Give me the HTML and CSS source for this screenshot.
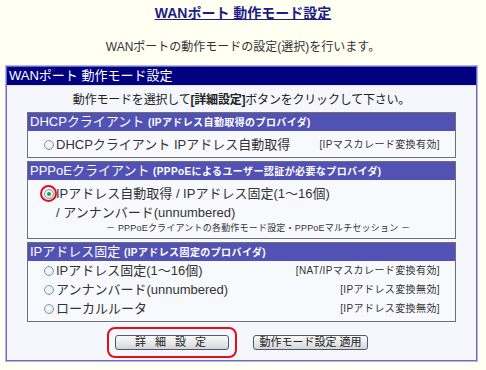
FILE: index.html
```html
<!DOCTYPE html>
<html lang="ja">
<head>
    <meta charset="UTF-8">
    <title>WANポート 動作モード設定</title>
    <link rel="stylesheet" href="styles.css">
</head>
<body>
    <h1 class="title"><a href="#">WANポート 動作モード設定</a></h1>
    <p class="lead">WANポートの動作モードの設定(選択)を行います。</p>

    <div class="panel">
        <div class="panel-frame">
            <div class="panel-head">WANポート 動作モード設定</div>
            <div class="panel-body">
                <p class="guide">動作モードを選択して<b>[詳細設定]</b>ボタンをクリックして下さい。</p>

                <div class="group">
                    <div class="group-head">DHCPクライアント <small>(IPアドレス自動取得のプロバイダ)</small></div>
                    <div class="group-body first">
                        <div class="opt">
                            <span class="radio"></span>
                            <span class="opt-text">DHCPクライアント IPアドレス自動取得</span>
                            <span class="note">[IPマスカレード変換有効]</span>
                        </div>
                    </div>
                </div>

                <div class="group">
                    <div class="group-head">PPPoEクライアント <small>(PPPoEによるユーザー認証が必要なプロバイダ)</small></div>
                    <div class="group-body first">
                        <div class="opt">
                            <span class="radio checked"><span class="ring"></span></span>
                            <span class="opt-text">IPアドレス自動取得 / IPアドレス固定(1～16個)<br>/ アンナンバード(unnumbered)</span>
                        </div>
                        <div class="sub-note">－ PPPoEクライアントの各動作モード設定・PPPoEマルチセッション －</div>
                    </div>
                </div>

                <div class="group">
                    <div class="group-head">IPアドレス固定 <small>(IPアドレス固定のプロバイダ)</small></div>
                    <div class="group-body">
                        <div class="opt">
                            <span class="radio"></span>
                            <span class="opt-text">IPアドレス固定(1～16個)</span>
                            <span class="note">[NAT/IPマスカレード変換有効]</span>
                        </div>
                        <div class="opt">
                            <span class="radio"></span>
                            <span class="opt-text">アンナンバード(unnumbered)</span>
                            <span class="note">[IPアドレス変換無効]</span>
                        </div>
                        <div class="opt">
                            <span class="radio"></span>
                            <span class="opt-text">ローカルルータ</span>
                            <span class="note">[IPアドレス変換無効]</span>
                        </div>
                    </div>
                </div>

                <div class="actions">
                    <span class="mark-wrap">
                        <button class="btn btn-detail">詳 細 設 定</button>
                        <span class="mark-box"></span>
                    </span>
                    <button class="btn btn-apply">動作モード設定 適用</button>
                </div>
            </div>
        </div>
    </div>
</body>
</html>
```

FILE: styles.css
```css
body {
    margin: 0;
    background-color: #fffff2;
    color: #222;
    font-family: "Liberation Sans", "Noto Sans CJK JP", sans-serif;
    font-size: 12px;
}
.title {
    margin: 0;
    padding-top: 4px;
    line-height: 18px;
    font-size: 14px;
    font-weight: bold;
    text-align: center;
}
.title a {
    color: #1c1c86;
}
.lead {
    margin: 17px 0 0;
    line-height: 16px;
    text-align: center;
    color: #333;
}
.panel {
    margin: 10px 8px 0 5px;
    border: 1px solid #b4b4ea;
}
.panel-frame {
    border: 1px solid #6a6ac6;
    background-color: #f5f7fc;
}
.panel-head {
    height: 18px;
    line-height: 18px;
    padding-left: 2px;
    background-color: #000080;
    color: #fff;
    font-size: 13px;
    border-bottom: 1px solid #e4e4f4;
}
.panel-body {
    padding: 6px 20px 10px;
}
.guide {
    margin: 0 0 4px;
    line-height: 16px;
    text-align: center;
    letter-spacing: -0.2px;
    color: #222;
}
.group {
    border: 1px solid #707070;
    background-color: #f8f9fd;
    margin-bottom: 3px;
}
.group-head {
    height: 18px;
    line-height: 18px;
    padding-left: 2px;
    background-color: #5252b4;
    color: #fff;
    font-size: 13px;
    white-space: nowrap;
}
.group-head small {
    font-size: 10px;
    font-weight: bold;
    letter-spacing: 0.4px;
}
.group-body {
    padding: 0 15px 3px 16px;
}
.group-body.first {
    padding-top: 4px;
    padding-bottom: 3px;
}
.opt {
    display: flex;
    align-items: flex-start;
    line-height: 19px;
    font-size: 13px;
    color: #333;
}
.opt-text {
    flex: 1;
}
.radio {
    position: relative;
    flex: none;
    width: 8px;
    height: 8px;
    margin: 5px 2px 0 0;
    border: 1px solid #7c98b8;
    border-radius: 50%;
    background: radial-gradient(circle at 40% 40%, #ffffff, #d4deea);
}
.radio.checked::after {
    content: "";
    position: absolute;
    left: 2px;
    top: 2px;
    width: 4px;
    height: 4px;
    border-radius: 50%;
    background-color: #2ca02c;
}
.ring {
    position: absolute;
    left: -5px;
    top: -5px;
    width: 13px;
    height: 13px;
    border: 2px solid #e0101a;
    border-radius: 50%;
}
.note {
    flex: none;
    font-size: 10px;
    letter-spacing: 0.4px;
    color: #333;
}
.sub-note {
    padding-left: 62px;
    line-height: 13px;
    font-size: 9px;
    letter-spacing: 0.2px;
    white-space: nowrap;
    color: #333;
}
.actions {
    margin-top: 13px;
    text-align: center;
    font-size: 0;
}
.mark-wrap {
    position: relative;
    display: inline-block;
}
.mark-box {
    position: absolute;
    left: -8px;
    top: -8px;
    right: -8px;
    bottom: -8px;
    border: 2px solid #e0101a;
    border-radius: 8px;
}
.btn {
    height: 15px;
    padding: 0;
    border: 1px solid #4a5a72;
    border-radius: 3px;
    background: linear-gradient(#fafafa, #e6e6e6 60%, #d4d4d4);
    color: #222;
    font-family: "Liberation Sans", "Noto Sans CJK JP", sans-serif;
    font-size: 11px;
    line-height: 13px;
    vertical-align: top;
}
.btn-detail {
    width: 114px;
    letter-spacing: 3px;
}
.btn-apply {
    width: 115px;
    margin-left: 24px;
}
```
